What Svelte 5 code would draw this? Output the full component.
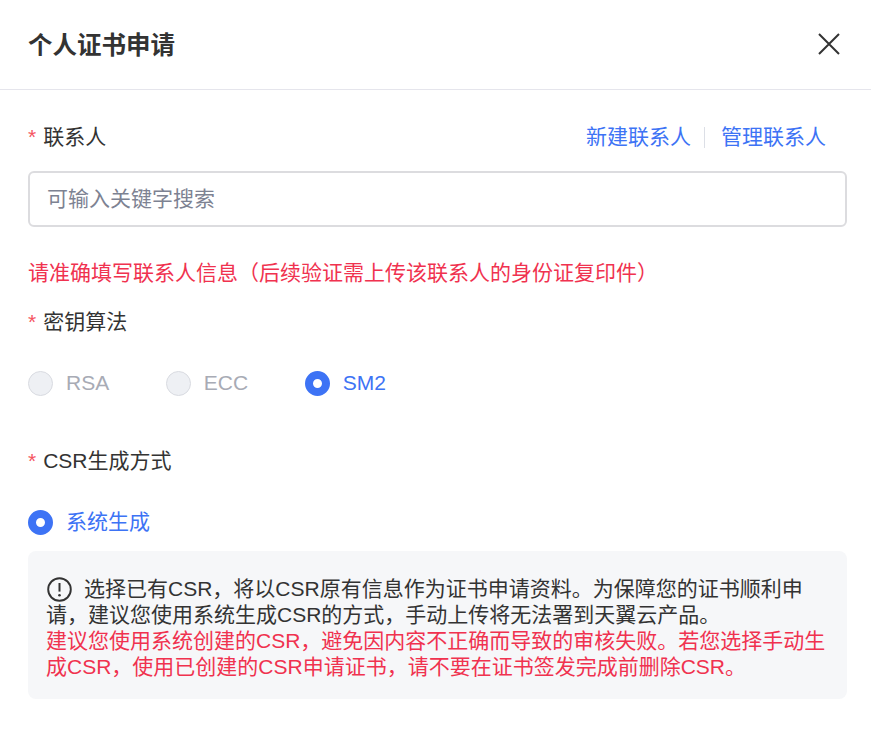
<script lang="ts">
  const algorithms = [
    { name: 'RSA', checked: false },
    { name: 'ECC', checked: false },
    { name: 'SM2', checked: true }
  ];
</script>

<div class="dialog">
  <header class="head">
    <h1 class="title">个人证书申请</h1>
    <svg class="close" width="24" height="24" viewBox="0 0 24 24" aria-label="关闭">
      <path d="M2 2 L22 22 M22 2 L2 22" stroke="#333" stroke-width="2" fill="none" />
    </svg>
  </header>

  <div class="body">
    <div class="label-row">
      <div class="label"><span class="star">*</span>联系人</div>
      <div class="links">
        <a href="#new">新建联系人</a>
        <span class="sep"></span>
        <a href="#manage">管理联系人</a>
      </div>
    </div>

    <input class="search" placeholder="可输入关键字搜索" />

    <p class="warn">请准确填写联系人信息（后续验证需上传该联系人的身份证复印件）</p>

    <div class="label second"><span class="star">*</span>密钥算法</div>
    <div class="radios">
      {#each algorithms as algo}
        <div class="radio" class:checked={algo.checked}>
          <span class="dot"></span>
          <span>{algo.name}</span>
        </div>
      {/each}
    </div>

    <div class="label third"><span class="star">*</span>CSR生成方式</div>
    <div class="radios single">
      <div class="radio checked">
        <span class="dot"></span>
        <span>系统生成</span>
      </div>
    </div>

    <div class="notice">
      <svg class="info" width="25" height="25" viewBox="0 0 25 25">
        <circle cx="12.5" cy="12.5" r="11.3" stroke="#333" stroke-width="1.9" fill="none" />
        <path d="M12.5 6 V14.6" stroke="#333" stroke-width="2" fill="none" />
        <circle cx="12.5" cy="18.2" r="1.3" fill="#333" />
      </svg>选择已有CSR，将以CSR原有信息作为证书申请资料。为保障您的证书顺利申请，建议您使用系统生成CSR的方式，手动上传将无法署到天翼云产品。
      <span class="danger">建议您使用系统创建的CSR，避免因内容不正确而导致的审核失败。若您选择手动生成CSR，使用已创建的CSR申请证书，请不要在证书签发完成前删除CSR。</span>
    </div>
  </div>
</div>

<style>
  :global(body) {
    background: #fff;
  }

  .dialog {
    width: 871px;
    height: 739px;
    overflow: hidden;
    font-family: 'Liberation Sans', 'Noto Sans CJK SC', sans-serif;
    font-size: 21px;
    line-height: 26px;
    color: #333;
  }

  .head {
    display: flex;
    align-items: center;
    justify-content: space-between;
    height: 89px;
    padding: 0 28px;
    border-bottom: 1px solid #e5e5ec;
  }

  .title {
    margin: 3px 0 0;
    font-size: 24.5px;
    font-weight: 700;
  }

  .close {
    margin: -2px 2px 0 0;
  }

  .body {
    padding: 34px 24px 0 28px;
  }

  .label-row {
    display: flex;
    justify-content: space-between;
    align-items: center;
    padding-right: 21px;
  }

  .star {
    color: #f5555f;
    margin-right: 7px;
    font-size: 21px;
  }

  .links {
    display: flex;
    align-items: center;
  }

  .links a {
    color: #3d73f5;
    text-decoration: none;
  }

  .sep {
    width: 1px;
    height: 21px;
    margin: 0 16px 0 13px;
    background: #dcdfe6;
  }

  .search {
    display: block;
    box-sizing: border-box;
    width: 819px;
    height: 56px;
    margin-top: 21px;
    padding: 0 17px;
    border: 2px solid #dcdcdf;
    border-radius: 6px;
    font: inherit;
    outline: none;
  }

  .search::placeholder {
    color: #7d8292;
    opacity: 1;
  }

  .warn {
    margin: 33px 0 0;
    color: #f0324f;
  }

  .second {
    margin-top: 23px;
  }

  .radios {
    display: flex;
    gap: 56.6px;
    margin-top: 35px;
  }

  .radio {
    display: flex;
    align-items: center;
    gap: 13px;
    color: #a8abb5;
  }

  .dot {
    box-sizing: border-box;
    width: 25px;
    height: 25px;
    border-radius: 50%;
    background: #eef0f4;
    border: 1px solid #d9dbe1;
  }

  .radio.checked {
    color: #3d73f5;
  }

  .radio.checked .dot {
    background: #fff;
    border: 8px solid #3d73f5;
  }

  .third {
    margin-top: 52px;
  }

  .single {
    margin-top: 35px;
  }

  .notice {
    width: 819px;
    height: 148px;
    box-sizing: border-box;
    margin-top: 16px;
    padding: 25px 18px 0;
    border-radius: 8px;
    background: #f6f7f9;
  }

  .info {
    vertical-align: -6px;
    margin: 0 12px 0 1px;
  }

  .danger {
    display: block;
    color: #f0324f;
  }
</style>
